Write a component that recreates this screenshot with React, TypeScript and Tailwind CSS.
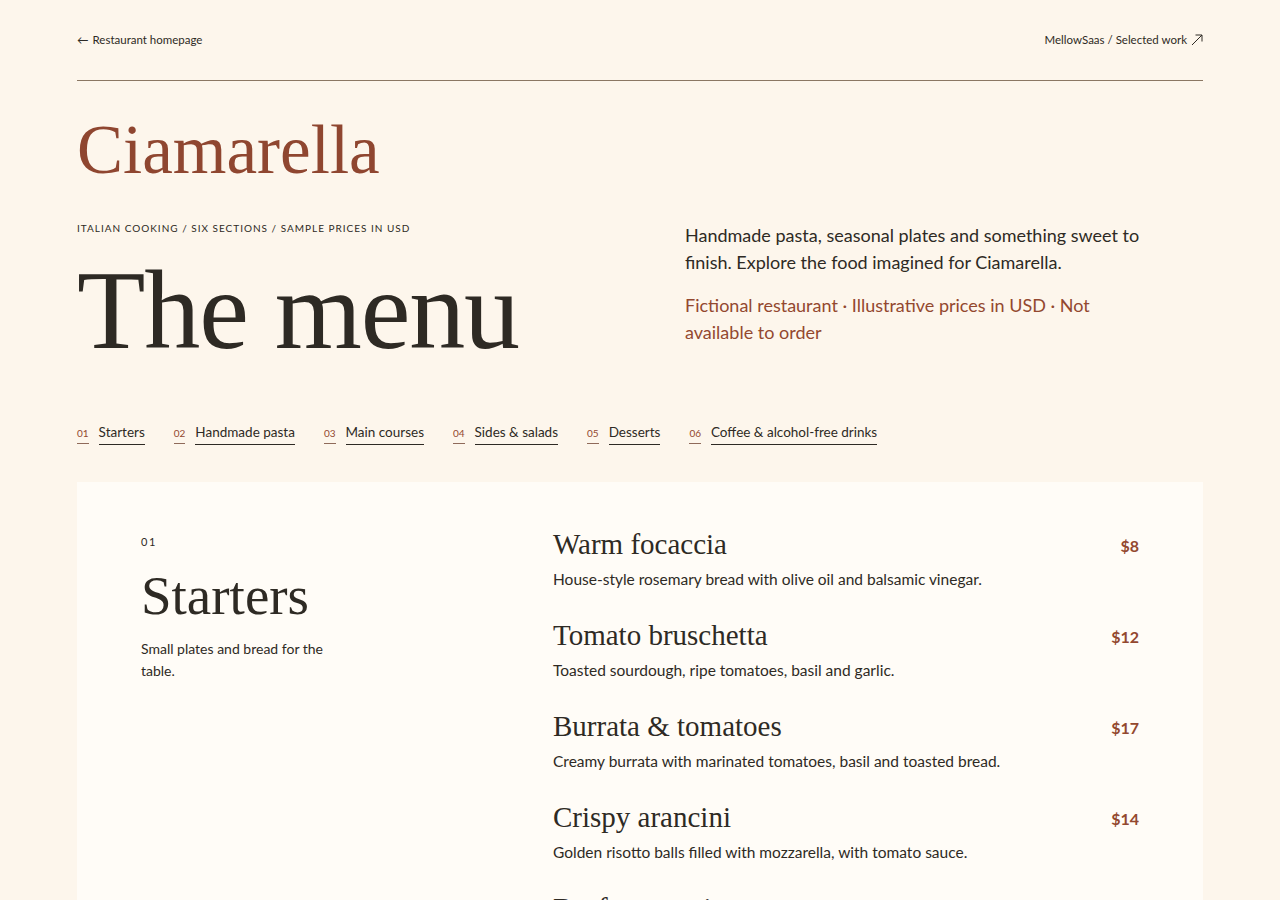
const serif = "font-['Liberation_Serif',serif]";

const sections = [
  {
    id: "01",
    title: "Starters",
    blurb: "Small plates and bread for the table.",
    items: [
      { name: "Warm focaccia", desc: "House-style rosemary bread with olive oil and balsamic vinegar.", price: "$8" },
      { name: "Tomato bruschetta", desc: "Toasted sourdough, ripe tomatoes, basil and garlic.", price: "$12" },
      { name: "Burrata & tomatoes", desc: "Creamy burrata with marinated tomatoes, basil and toasted bread.", price: "$17" },
      { name: "Crispy arancini", desc: "Golden risotto balls filled with mozzarella, with tomato sauce.", price: "$14" },
      { name: "Beef carpaccio", desc: "Thin slices of beef with rocket, parmesan and lemon.", price: "$16" },
    ],
  },
];

const nav = [
  ["01", "Starters"],
  ["02", "Handmade pasta"],
  ["03", "Main courses"],
  ["04", "Sides & salads"],
  ["05", "Desserts"],
  ["06", "Coffee & alcohol-free drinks"],
];

export default function App() {
  return (
    <div className="min-h-screen bg-[#fdf6ec] font-['Lato',sans-serif] text-[#2e2a24]">
      <div className="mx-auto w-[1126px]">
        <header className="flex items-center justify-between border-b border-[#8b7763] pb-[32px] pt-[31px] text-[11.5px]">
          <a className="flex items-center gap-1">
            <span>←</span> Restaurant homepage
          </a>
          <a className="flex items-center gap-1">
            MellowSaas / Selected work
            <svg width="12" height="12" viewBox="0 0 12 12" fill="none" stroke="currentColor" strokeWidth="1">
              <path d="M1 11 L11 1 M4.5 1 H11 V7.5" />
            </svg>
          </a>
        </header>

        <h1 className={`${serif} mt-[35px] text-[69px] leading-none text-[#8f4630]`}>Ciamarella</h1>

        <div className="mt-[36px] grid grid-cols-[608px_1fr]">
          <div>
            <p className="text-[10px] uppercase tracking-[0.1em]">
              Italian cooking / Six sections / Sample prices in USD
            </p>
            <h2 className={`${serif} mt-[18px] text-[112px] leading-none tracking-[-0.01em]`}>The menu</h2>
          </div>
          <div className="max-w-[470px] pt-[1px] text-[18px] leading-[27px]">
            <p>Handmade pasta, seasonal plates and something sweet to finish. Explore the food imagined for Ciamarella.</p>
            <p className="mt-[16px] text-[#93482f]">
              Fictional restaurant · Illustrative prices in USD · Not available to order
            </p>
          </div>
        </div>

        <nav className="mt-[56px] flex items-center gap-[29px]">
          {nav.map(([n, label]) => (
            <a key={n} className="flex items-baseline gap-[10px]">
              <span className="border-b border-[#8f6a5a] pb-[2px] text-[10px] text-[#93482f]">{n}</span>
              <span className="border-b border-[#2e2a24] pb-[1px] text-[13.5px]">{label}</span>
            </a>
          ))}
        </nav>

        <main className="mt-[37px] bg-[#fffcf7]">
          {sections.map((s) => (
            <section key={s.id} className="grid grid-cols-[412px_1fr] px-[64px] pb-[64px] pt-[44px]">
              <div>
                <p className="mt-[8px] text-[11px] tracking-[0.15em]">{s.id}</p>
                <h3 className={`${serif} mt-[18px] text-[55px] leading-none`}>{s.title}</h3>
                <p className="mt-[15px] w-[190px] text-[14px] leading-[22px]">{s.blurb}</p>
              </div>
              <ul className="flex flex-col gap-[25px]">
                {s.items.map((it) => (
                  <li key={it.name}>
                    <div className="flex items-center justify-between">
                      <h4 className={`${serif} text-[29px] leading-[36px]`}>{it.name}</h4>
                      <span className="pt-[4px] text-[16px] font-bold text-[#93482f]">{it.price}</span>
                    </div>
                    <p className="mt-[4px] text-[15.5px] leading-[26px]">{it.desc}</p>
                  </li>
                ))}
              </ul>
            </section>
          ))}
        </main>
      </div>
    </div>
  );
}
